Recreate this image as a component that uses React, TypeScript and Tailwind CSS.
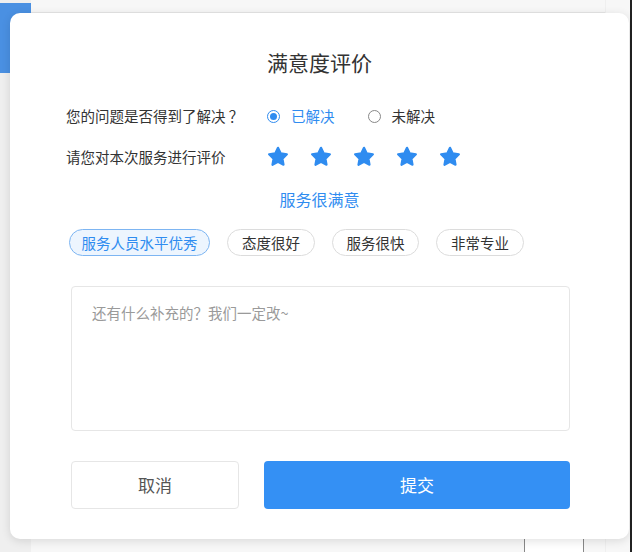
import { useState } from 'react';

// Types
interface Tag {
    label: string;
    width: string;
}

const tags: Tag[] = [
    { label: '服务人员水平优秀', width: 'w-[141px]' },
    { label: '态度很好', width: 'w-[88px]' },
    { label: '服务很快', width: 'w-[87px]' },
    { label: '非常专业', width: 'w-[88px]' },
];

function StarIcon() {
    return (
        <svg width="24" height="24" viewBox="0 0 24 24" className="text-[#2f8cf0]">
            <path
                d="M12 2.8l2.75 5.6 6.15.9-4.45 4.35 1.05 6.1L12 16.85l-5.5 2.9 1.05-6.1L3.1 9.3l6.15-.9z"
                fill="currentColor"
                stroke="currentColor"
                strokeWidth="2.2"
                strokeLinejoin="round"
            />
        </svg>
    );
}

function Radio({ checked, label }: { checked: boolean; label: string }) {
    return (
        <div className="flex items-center gap-[11px]">
            <span
                className={`flex h-[13px] w-[13px] items-center justify-center rounded-full border ${
                    checked ? 'border-[#2f8cf0]' : 'border-[#888]'
                }`}
            >
                {checked && <span className="h-[7px] w-[7px] rounded-full bg-[#2f8cf0]"></span>}
            </span>
            <span className={checked ? 'text-[#2f8cf0]' : 'text-[#333]'}>{label}</span>
        </div>
    );
}

export default function App() {
    const [selected] = useState<number>(0);

    return (
        <div
            className="relative h-[552px] w-[632px] overflow-hidden bg-[#efefef]"
            style={{ fontFamily: '"Noto Sans CJK SC", "Noto Sans", sans-serif' }}
        >
            {/* Page behind the dialog */}
            <div className="absolute left-[31px] top-0 h-[13px] w-[574px] border-b border-[#e6e6e6] bg-[#f7f7f7]"></div>
            <div className="absolute left-0 top-[3px] h-[70px] w-[31px] bg-[#4a90e2]"></div>
            <div className="absolute left-[31px] top-[538px] h-[14px] w-[574px] bg-[#f7f7f7]"></div>
            <div className="absolute left-[524px] top-[535px] h-[24px] w-[60px] rounded border border-[#888] bg-white"></div>
            <div className="absolute right-[2px] top-0 h-[552px] w-[24px] bg-[#f7f7f7]"></div>
            <div className="absolute right-0 top-0 h-[552px] w-[2px] bg-[#222]"></div>

            {/* Dialog */}
            <div className="absolute left-[10px] top-[13px] flex h-[526px] w-[619px] flex-col rounded-[10px] bg-white px-[56px] pt-[35px] shadow-[0_2px_10px_rgba(0,0,0,0.12)]">
                <h2 className="text-center text-[21px] leading-[28px] text-[#333]">满意度评价</h2>

                <div className="mt-[30px] flex h-[20px] items-center text-[14.5px] text-[#333]">
                    <span className="w-[201px]">您的问题是否得到了解决 ？</span>
                    <div className="flex items-center gap-[33px]">
                        <Radio checked label="已解决" />
                        <Radio checked={false} label="未解决" />
                    </div>
                </div>

                <div className="mt-[19px] flex h-[24px] items-center text-[14.5px] text-[#333]">
                    <span className="w-[200px]">请您对本次服务进行评价</span>
                    <div className="flex items-center gap-[19px]">
                        {[0, 1, 2, 3, 4].map((i) => (
                            <StarIcon key={i} />
                        ))}
                    </div>
                </div>

                <p className="mt-[19px] text-center text-[16px] leading-[22px] text-[#2f8cf0]">服务很满意</p>

                <div className="mt-[19px] flex gap-[17px] pl-[3px]">
                    {tags.map((tag, i) => (
                        <span
                            key={tag.label}
                            className={`flex h-[27px] items-center justify-center rounded-full border text-[14.5px] ${tag.width} ${
                                i === selected
                                    ? 'border-[#7db5f2] bg-[#edf5fe] text-[#2f8cf0]'
                                    : 'border-[#dcdcdc] bg-white text-[#333]'
                            }`}
                        >
                            {tag.label}
                        </span>
                    ))}
                </div>

                <textarea
                    className="ml-[5px] mt-[30px] h-[145px] w-[499px] resize-none rounded-[4px] border border-[#e6e6e6] px-[20px] py-[16px] text-[14.5px] leading-[20px] text-[#333] outline-none placeholder:text-[#9a9a9a]"
                    placeholder="还有什么补充的？我们一定改~"
                ></textarea>

                <div className="ml-[5px] mt-[30px] flex w-[499px] gap-[25px]">
                    <button className="h-[48px] w-[168px] rounded-[4px] border border-[#e6e6e6] bg-white text-[17px] text-[#555]">
                        取消
                    </button>
                    <button className="h-[48px] flex-1 rounded-[4px] bg-[#3490f4] text-[17px] text-white">
                        提交
                    </button>
                </div>
            </div>
        </div>
    );
}
